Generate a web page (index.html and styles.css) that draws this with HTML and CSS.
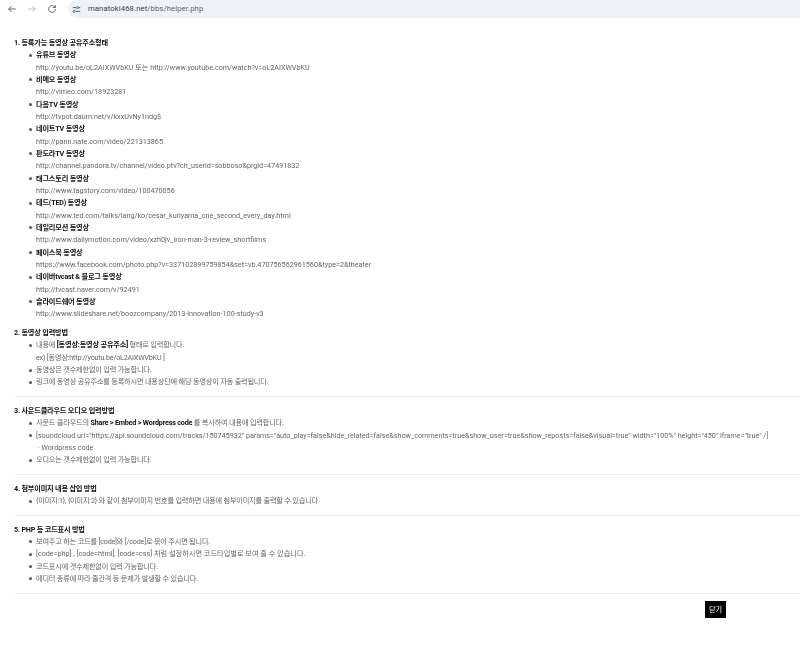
FILE: index.html
```html
<!DOCTYPE html>
<html lang="ko">
<head>
<meta charset="utf-8">
<title>helper</title>
<link rel="stylesheet" href="styles.css">
</head>
<body>
<header class="toolbar">
  <svg class="nav" viewBox="0 0 16 16"><path d="M13 8H3.500M7.500 4 3.500 8l4 4" fill="none" stroke="#5f6368" stroke-width="1.300"/></svg>
  <svg class="nav" viewBox="0 0 16 16"><path d="M3 8h9.500M8.500 4l4 4-4 4" fill="none" stroke="#b4b7bb" stroke-width="1.300"/></svg>
  <svg class="nav" viewBox="0 0 16 16"><path d="M12.500 8a4.500 4.500 0 1 1-1.300-3.200L12.500 6M12.500 2.800V6H9.300" fill="none" stroke="#5f6368" stroke-width="1.300"/></svg>
  <div class="omnibox">
    <svg class="tune" viewBox="0 0 12 12"><path d="M1 3.500h5M9 3.500h2M5 8.500h6" fill="none" stroke="#444" stroke-width="1.100"/><circle cx="7.500" cy="3.500" r="1.400" fill="none" stroke="#444"/><circle cx="2.800" cy="8.500" r="1.400" fill="none" stroke="#444"/></svg>
    <span class="url">manatoki468.net<span class="path">/bbs/helper.php</span></span>
  </div>
</header>
<main class="help">
  <section class="block first">
    <b class="title">1. 등록가능 동영상 공유주소형태</b>
    <ul>
      <li><b>유튜브 동영상</b><br>http://youtu.be/oL2AIXWVbKU 또는 http://www.youtube.com/watch?v=oL2AIXWVbKU</li>
      <li><b>비메오 동영상</b><br>http://vimeo.com/18923281</li>
      <li><b>다음TV 동영상</b><br>http://tvpot.daum.net/v/kxxUvNy1ndg$</li>
      <li><b>네이트TV 동영상</b><br>http://pann.nate.com/video/221313865</li>
      <li><b>판도라TV 동영상</b><br>http://channel.pandora.tv/channel/video.ptv?ch_userid=sobboso&amp;prgid=47491832</li>
      <li><b>태그스토리 동영상</b><br>http://www.tagstory.com/video/100470056</li>
      <li><b>테드(TED) 동영상</b><br>http://www.ted.com/talks/lang/ko/cesar_kuriyama_one_second_every_day.html</li>
      <li><b>데일리모션 동영상</b><br>http://www.dailymotion.com/video/xzh0jv_iron-man-3-review_shortfilms</li>
      <li><b>페이스북 동영상</b><br>https://www.facebook.com/photo.php?v=337102899759854&amp;set=vb.470756562961560&amp;type=2&amp;theater</li>
      <li><b>네이버tvcast &amp; 블로그 동영상</b><br>http://tvcast.naver.com/v/92491</li>
      <li><b>슬라이드쉐어 동영상</b><br>http://www.slideshare.net/boozcompany/2013-innovation-100-study-v3</li>
    </ul>
  </section>
  <section class="block">
    <b class="title">2. 동영상 입력방법</b>
    <ul>
      <li class="ko">내용에 <b>[동영상:동영상 공유주소]</b> 형태로 입력합니다.<br>ex) [동영상:http://youtu.be/oL2AIXWVbKU ]</li>
      <li class="ko">동영상은 갯수제한없이 입력 가능합니다.</li>
      <li class="ko">링크에 동영상 공유주소를 등록하시면 내용상단에 해당 동영상이 자동 출력됩니다.</li>
    </ul>
  </section>
  <section class="block">
    <b class="title">3. 사운드클라우드 오디오 입력방법</b>
    <ul>
      <li class="ko">사운드 클라우드의 <b>Share &gt; Embed &gt; Wordpress code</b> 를 복사하여 내용에 입력합니다.</li>
      <li>[soundcloud url="https://api.soundcloud.com/tracks/150745932" params="auto_play=false&amp;hide_related=false&amp;show_comments=true&amp;show_user=true&amp;show_reposts=false&amp;visual=true" width="100%" height="450" iframe="true" /]<br>&nbsp;· Wordpress code</li>
      <li class="ko">오디오는 갯수제한없이 입력 가능합니다.</li>
    </ul>
  </section>
  <section class="block">
    <b class="title">4. 첨부이미지 내용 삽입 방법</b>
    <ul>
      <li class="ko">{이미지:1}, {이미지:2} 와 같이 첨부이미지 번호를 입력하면 내용에 첨부이미지를 출력할 수 있습니다.</li>
    </ul>
  </section>
  <section class="block">
    <b class="title">5. PHP 등 코드표시 방법</b>
    <ul>
      <li class="ko">보여주고 하는 코드를 [code]와 [/code]로 묶어 주시면 됩니다.</li>
      <li>[code=php] , [code=html], [code=css] 처럼 설정하시면 코드타입별로 보여 줄 수 있습니다.</li>
      <li class="ko">코드표시에 갯수제한없이 입력 가능합니다.</li>
      <li class="ko">에디터 종류에 따라 줄간격 등 문제가 발생할 수 있습니다.</li>
    </ul>
  </section>
  <div class="actions"><button class="close" type="button">닫기</button></div>
</main>
</body>
</html>
```
FILE: styles.css
```css
* { box-sizing: border-box; }
html, body { margin: 0; padding: 0; background: #fff; }
body {
  width: 800px;
  height: 648px;
  overflow: hidden;
  font-family: "Roboto", "Noto Sans CJK KR", sans-serif;
  font-size: 7.2px;
  line-height: 12.33px;
  color: #666;
}
.toolbar {
  height: 18px;
  display: flex;
  align-items: center;
  gap: 8px;
  padding-left: 6px;
  background: #fff;
  will-change: opacity;
}
.nav { width: 12px; height: 12px; flex: none; }
.omnibox {
  flex: 1;
  height: 18px;
  margin-left: 2px;
  display: flex;
  align-items: center;
  gap: 7px;
  padding-left: 4px;
  background: #edf2fa;
  border-radius: 9px 0 0 9px;
}
.tune { width: 9px; height: 9px; flex: none; }
.url {
  font-family: "Roboto", sans-serif;
  font-size: 7.700px;
  letter-spacing: 0.100px;
  color: #3c4043;
}
.path { color: #5f6368; }
.help { padding: 19px 0 0 14px; will-change: opacity; }
.block {
  padding: 7.600px 0;
  border-bottom: 1px solid #f0f0f0;
}
.first {
  padding: 0 0 6.500px;
  border-bottom: 0;
}
.first + .block { padding-top: 0; }
.title { display: block; color: #111; letter-spacing: -0.200px; }
b { color: #111; font-weight: 700; letter-spacing: -0.200px; }
.ko { letter-spacing: -0.200px; }
ul { margin: 0; padding: 0 0 0 22px; list-style: none; }
li { position: relative; margin: 0; white-space: nowrap; }
li::before {
  content: "";
  position: absolute;
  left: -7px;
  top: 4.500px;
  width: 3px;
  height: 3px;
  border-radius: 50%;
  background: #555;
}
.actions { display: flex; justify-content: flex-end; padding: 7px 74px 0 0; }
.close {
  width: 21px;
  height: 17px;
  padding: 0;
  border: 0;
  background: #000;
  color: #fff;
  font: inherit;
  line-height: 17px;
}
```
